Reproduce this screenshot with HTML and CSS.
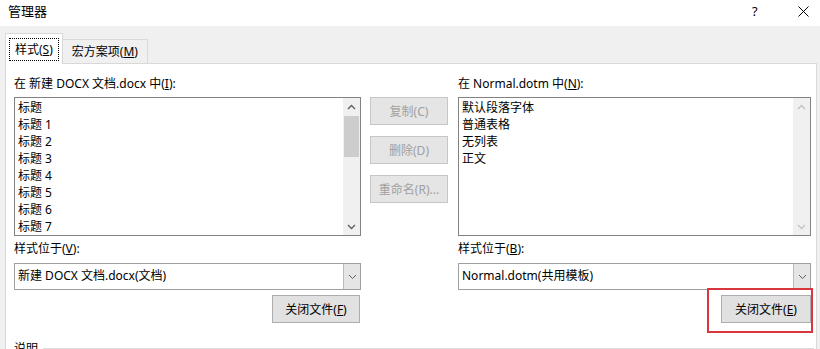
FILE: index.html
```html
<!DOCTYPE html>
<html lang="zh-CN">
  <head>
    <meta charset="utf-8">
    <title>管理器</title>
    <link rel="stylesheet" href="styles.css">
  </head>
  <body>
    <div class="titlebar">
      <span class="title">管理器</span>
      <span class="help">?</span>
      <span class="close">
        <svg width="11" height="11" viewBox="0 0 11 11"><path d="M0.5 0.5 L10.5 10.5 M10.5 0.5 L0.5 10.5" stroke="#000" stroke-width="1" fill="none"/></svg>
      </span>
    </div>
    <div class="tabs">
      <div class="tab tab-active"><span class="focus">样式(<u>S</u>)</span></div>
      <div class="tab">宏方案项(<u>M</u>)</div>
    </div>
    <div class="panel">
      <div class="columns">
        <div class="side side-left">
          <div class="label">在 新建 DOCX 文档.docx 中(<u>I</u>):</div>
          <div class="listbox">
            <ul class="items">
              <li>标题</li>
              <li>标题 1</li>
              <li>标题 2</li>
              <li>标题 3</li>
              <li>标题 4</li>
              <li>标题 5</li>
              <li>标题 6</li>
              <li>标题 7</li>
            </ul>
            <div class="scrollbar">
              <span class="arrow">
                <svg width="9" height="6" viewBox="0 0 9 6"><path d="M1 5 L4.5 1.5 L8 5" stroke="#606060" stroke-width="1.4" fill="none"/></svg>
              </span>
              <span class="thumb"></span>
              <span class="track"></span>
              <span class="arrow">
                <svg width="9" height="6" viewBox="0 0 9 6"><path d="M1 1 L4.5 4.5 L8 1" stroke="#606060" stroke-width="1.4" fill="none"/></svg>
              </span>
            </div>
          </div>
          <div class="label label-gap">样式位于(<u>V</u>):</div>
          <div class="combo">
            <span class="combo-text">新建 DOCX 文档.docx(文档)</span>
            <span class="combo-arrow">
              <svg width="9" height="6" viewBox="0 0 9 6"><path d="M1 1 L4.5 4.5 L8 1" stroke="#606060" stroke-width="1" fill="none"/></svg>
            </span>
          </div>
          <div class="actions">
            <button class="btn">关闭文件(<u>F</u>)</button>
          </div>
        </div>

        <div class="middle">
          <button class="btn btn-disabled">复制(C)</button>
          <button class="btn btn-disabled">删除(D)</button>
          <button class="btn btn-disabled">重命名(R)...</button>
        </div>

        <div class="side side-right">
          <div class="label">在 Normal.dotm 中(<u>N</u>):</div>
          <div class="listbox">
            <ul class="items">
              <li>默认段落字体</li>
              <li>普通表格</li>
              <li>无列表</li>
              <li>正文</li>
            </ul>
            <div class="scrollbar scrollbar-off">
              <span class="arrow">
                <svg width="9" height="6" viewBox="0 0 9 6"><path d="M1 5 L4.5 1.5 L8 5" stroke="#c4c4c4" stroke-width="1.4" fill="none"/></svg>
              </span>
              <span class="track"></span>
              <span class="arrow">
                <svg width="9" height="6" viewBox="0 0 9 6"><path d="M1 1 L4.5 4.5 L8 1" stroke="#c4c4c4" stroke-width="1.4" fill="none"/></svg>
              </span>
            </div>
          </div>
          <div class="label label-gap">样式位于(<u>B</u>):</div>
          <div class="combo">
            <span class="combo-text">Normal.dotm(共用模板)</span>
            <span class="combo-arrow">
              <svg width="9" height="6" viewBox="0 0 9 6"><path d="M1 1 L4.5 4.5 L8 1" stroke="#606060" stroke-width="1" fill="none"/></svg>
            </span>
          </div>
          <div class="actions">
            <span class="marked">
              <button class="btn">关闭文件(<u>E</u>)</button>
            </span>
          </div>
        </div>
      </div>

      <div class="group">
        <span class="group-title">说明</span>
        <span class="group-line"></span>
      </div>
    </div>
  </body>
</html>
```

FILE: styles.css
```css
html, body {
  margin: 0;
  padding: 0;
  overflow: hidden;
}
body {
  background: #f0f0f0;
  font-family: "Segoe UI", "Noto Sans", "Noto Sans CJK SC", sans-serif;
  font-size: 12px;
  color: #000;
  height: 349px;
}
u {
  text-decoration: underline;
  text-underline-offset: 1px;
}

/* title bar */
.titlebar {
  height: 26px;
  background: #fff;
  display: flex;
  align-items: center;
  padding-left: 8px;
}
.title {
  font-size: 13px;
  line-height: 20px;
  margin-top: -5px;
  flex: 1;
}
.help {
  font-size: 13px;
  margin-top: -4px;
  width: 46px;
}
.close {
  width: 22px;
  margin-top: -4px;
}
.close svg {
  display: block;
}

/* tabs */
.tabs {
  display: flex;
  align-items: flex-end;
  padding: 7px 0 0 5px;
  height: 30px;
}
.tab {
  height: 23px;
  padding: 0 9px;
  border: 1px solid #d9d9d9;
  border-bottom: none;
  background: #f0f0f0;
  display: flex;
  align-items: center;
  line-height: 17px;
  margin-left: -1px;
}
.tab-active {
  height: 30px;
  margin-left: 0;
  padding: 0 3px;
  background: #fff;
  position: relative;
  z-index: 1;
  margin-bottom: -1px;
}
.focus {
  border: 1px dotted #000;
  padding: 2px 5px;
  line-height: 17px;
}

/* panel */
.panel {
  background: #fff;
  border: 1px solid #d9d9d9;
  border-bottom: none;
  margin: 0 3px 0 5px;
  padding: 11px 0 0 8px;
  height: 275px;
  overflow: hidden;
}
.columns {
  display: flex;
}
.side-left {
  width: 347px;
}
.side-right {
  width: 353px;
}
.middle {
  width: 78px;
  margin: 22px 10px 0 9px;
  display: flex;
  flex-direction: column;
  gap: 11px;
}
.label {
  line-height: 17px;
  height: 17px;
  white-space: nowrap;
}
.label-gap {
  margin-top: 4px;
}

/* list boxes */
.listbox {
  margin-top: 5px;
  height: 137px;
  border: 1px solid #828282;
  display: flex;
}
.items {
  list-style: none;
  margin: 0;
  padding: 1px 0 0 3px;
  flex: 1;
  overflow: hidden;
}
.items li {
  line-height: 17px;
  height: 17px;
  white-space: nowrap;
}
.scrollbar {
  width: 17px;
  background: #f0f0f0;
  display: flex;
  flex-direction: column;
}
.scrollbar .arrow {
  height: 17px;
  display: flex;
  align-items: center;
  justify-content: center;
}
.scrollbar .thumb {
  height: 41px;
  margin: 1px 1px 0;
  background: #cdcdcd;
}
.scrollbar .track {
  flex: 1;
}

/* combo boxes */
.combo {
  margin-top: 6px;
  height: 25px;
  border: 1px solid #a0a0a0;
  display: flex;
  align-items: stretch;
}
.combo-text {
  flex: 1;
  padding-left: 3px;
  line-height: 24px;
  white-space: nowrap;
}
.combo-arrow {
  width: 16px;
  background: #e5e5e5;
  border-left: 1px solid #bcbcbc;
  display: flex;
  align-items: center;
  justify-content: center;
}

/* buttons */
.btn {
  font: inherit;
  color: #000;
  background: #e1e1e1;
  border: 1px solid #adadad;
  height: 28px;
  padding: 0;
  line-height: 17px;
  cursor: default;
}
.btn-disabled {
  color: #a0a0a0;
  background: #e5e5e5;
  border-color: #c6c6c6;
}
.actions {
  margin-top: 5px;
  display: flex;
  justify-content: flex-end;
  padding-right: 1px;
}
.actions .btn {
  width: 88px;
}
.marked {
  position: relative;
  display: flex;
}
.marked::after {
  content: "";
  position: absolute;
  left: -14px;
  top: -7px;
  right: -2px;
  bottom: -10px;
  border: 2px solid #d9363e;
  pointer-events: none;
}
.side-right .actions {
  padding-right: 0;
}
.side-right .actions .btn {
  width: 90px;
}

/* description group */
.group {
  margin-top: 17px;
  display: flex;
  align-items: center;
}
.group-title {
  line-height: 17px;
  padding-right: 5px;
}
.group-line {
  flex: 1;
  border-top: 1px solid #dcdcdc;
  margin-right: 2px;
}
```
